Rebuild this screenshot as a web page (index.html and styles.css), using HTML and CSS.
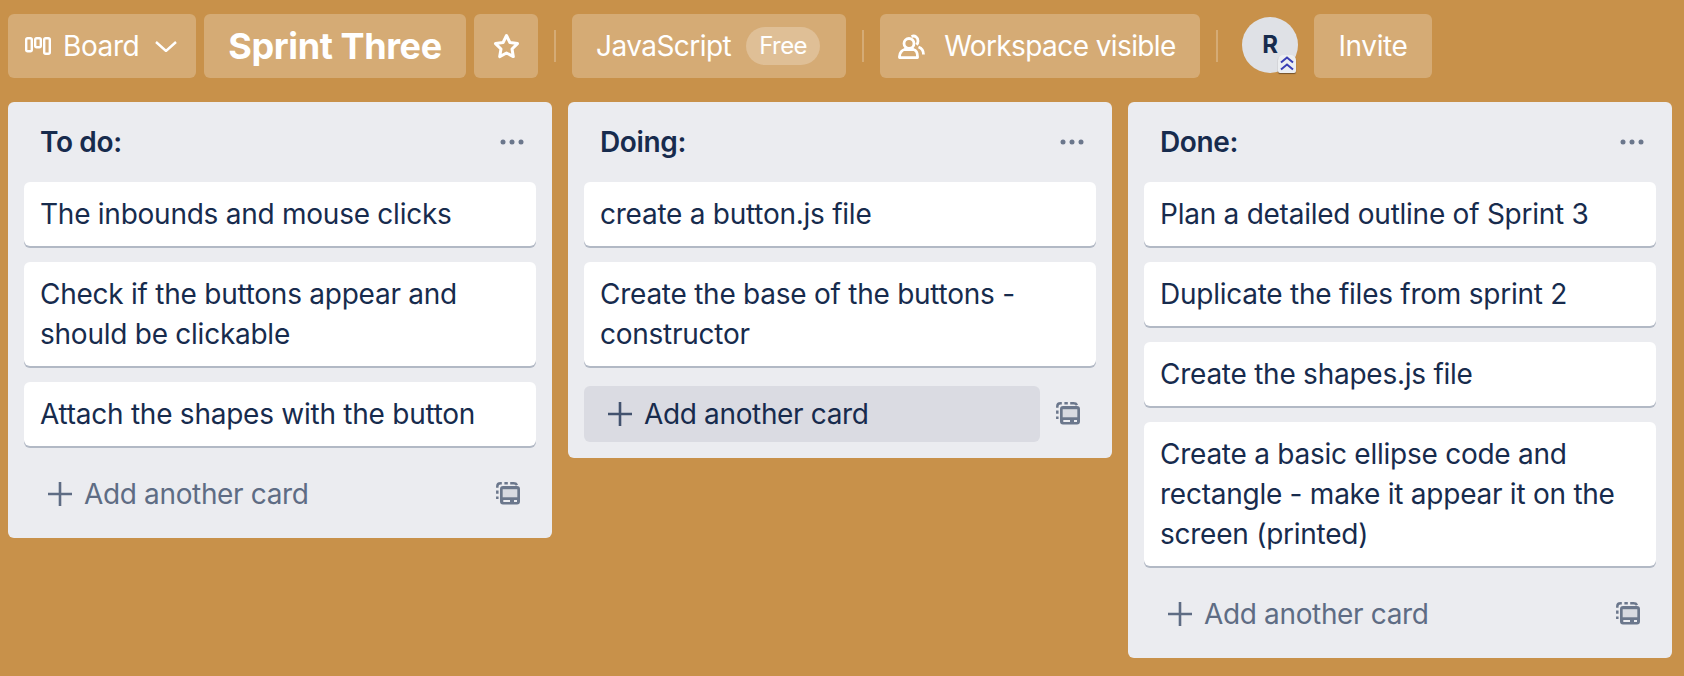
FILE: index.html
```html
<!DOCTYPE html>
<html lang="en">
<head>
    <meta charset="UTF-8">
    <title>Sprint Three | Trello</title>
    <link rel="stylesheet" href="styles.css">
</head>
<body>
    <!-- icons used more than once -->
    <svg class="defs" width="0" height="0">
        <symbol id="icon-template" viewBox="0 0 24 24">
            <path d="M1.300 17v-2.400M1.300 11.800V8.600M1.300 5.800V4.500C1.300 2.500 2.500 1.300 4.500 1.300h1.300M8.400 1.300h3.400M14.200 1.300h3.400c1.600 0 2.800.6 3.400 1.800" fill="none" stroke="currentColor" stroke-width="2.500"/>
            <path d="M6.500 7.300h15v8h-15z" fill="currentColor" opacity="0.15"/>
            <path fill-rule="evenodd" d="M7 4h14a3 3 0 0 1 3 3v12.500a3 3 0 0 1-3 3H7a3 3 0 0 1-3-3V7a3 3 0 0 1 3-3zM6.700 7.300v8h14.600v-8zM7.300 18v2H14v-2zM18 18v2h3v-2z" fill="currentColor"/>
        </symbol>
        <symbol id="icon-plus" viewBox="0 0 24 24">
            <path d="M12 0v24M0 12h24" fill="none" stroke="currentColor" stroke-width="2.600"/>
        </symbol>
        <symbol id="icon-dots" viewBox="0 0 24 6">
            <circle cx="3" cy="3" r="2.500" fill="currentColor"/>
            <circle cx="12" cy="3" r="2.500" fill="currentColor"/>
            <circle cx="21" cy="3" r="2.500" fill="currentColor"/>
        </symbol>
    </svg>

    <header class="board-header">
        <button class="hbtn board-switch">
            <svg class="icon-board" width="26" height="18" viewBox="0 0 26 18" fill="none" stroke="#fff" stroke-width="2.400">
                <rect x="1.200" y="1.200" width="5.600" height="13" rx="1.500"/>
                <rect x="10.200" y="1.200" width="5.600" height="9" rx="1.500"/>
                <rect x="19.200" y="1.200" width="5.600" height="15.600" rx="1.500"/>
            </svg>
            <span>Board</span>
            <svg class="icon-chevron" width="22" height="11" viewBox="0 0 22 11" fill="none" stroke="#fff" stroke-width="2.400">
                <path d="M1 1l10 9 10-9"/>
            </svg>
        </button>
        <button class="hbtn board-name">Sprint Three</button>
        <button class="hbtn star">
            <svg width="27" height="26" viewBox="0 0 27 26" fill="none" stroke="#fff" stroke-width="3" stroke-linejoin="round">
                <path d="M13.500 2.500l3.400 7 7.600 1.100-5.500 5.400 1.300 7.600-6.800-3.600-6.800 3.600 1.300-7.600-5.500-5.400 7.600-1.100z"/>
            </svg>
        </button>
        <span class="sep"></span>
        <button class="hbtn workspace">JavaScript <span class="pill">Free</span></button>
        <span class="sep"></span>
        <button class="hbtn visible">
            <svg width="27" height="25" viewBox="0 0 27 25" fill="none" stroke="#fff" stroke-width="2.800">
                <circle cx="11" cy="9.500" r="5"/>
                <path d="M1.500 23.600v-1.100c0-4 3-6.500 5-7h9c2 .5 4 3 4 7v1.100z" stroke-linejoin="round"/>
                <path d="M13.500 2.500c3.500-1.500 6.500 1 6.500 4.500 0 1.500-.5 2.800-1.500 3.800M20.500 13c3 1 5 4 5 7.500"/>
            </svg>
            <span>Workspace visible</span>
        </button>
        <span class="sep"></span>
        <div class="avatar">R
            <span class="badge">
                <svg width="14" height="15" viewBox="0 0 14 15" fill="none" stroke="#3a3fb5" stroke-width="2">
                    <path d="M1 6.500l6-5 6 5M1 13.500l6-5 6 5"/>
                </svg>
            </span>
        </div>
        <button class="hbtn invite">Invite</button>
    </header>

    <main class="board">
        <section class="list">
            <div class="list-head">
                <h2>To do:</h2>
                <svg class="dots" width="24" height="6"><use href="#icon-dots"/></svg>
            </div>
            <div class="card">The inbounds and mouse clicks</div>
            <div class="card">Check if the buttons appear and should be clickable</div>
            <div class="card">Attach the shapes with the button</div>
            <div class="list-foot">
                <div class="add"><svg width="24" height="24"><use href="#icon-plus"/></svg>Add another card</div>
                <svg class="template" width="24" height="24"><use href="#icon-template"/></svg>
            </div>
        </section>

        <section class="list">
            <div class="list-head">
                <h2>Doing:</h2>
                <svg class="dots" width="24" height="6"><use href="#icon-dots"/></svg>
            </div>
            <div class="card">create a button.js file</div>
            <div class="card">Create the base of the buttons - constructor</div>
            <div class="list-foot">
                <div class="add add-hover"><svg width="24" height="24"><use href="#icon-plus"/></svg>Add another card</div>
                <svg class="template" width="24" height="24"><use href="#icon-template"/></svg>
            </div>
        </section>

        <section class="list">
            <div class="list-head">
                <h2>Done:</h2>
                <svg class="dots" width="24" height="6"><use href="#icon-dots"/></svg>
            </div>
            <div class="card">Plan a detailed outline of Sprint 3</div>
            <div class="card">Duplicate the files from sprint 2</div>
            <div class="card">Create the shapes.js file</div>
            <div class="card">Create a basic ellipse code and rectangle - make it appear it on the screen (printed)</div>
            <div class="list-foot">
                <div class="add"><svg width="24" height="24"><use href="#icon-plus"/></svg>Add another card</div>
                <svg class="template" width="24" height="24"><use href="#icon-template"/></svg>
            </div>
        </section>
    </main>
</body>
</html>
```

FILE: styles.css
```css
body {
    margin: 0;
    height: 676px;
    overflow: hidden;
    background-color: #c8914a;
    font-family: Inter, "Noto Sans", sans-serif;
    font-size: 28px;
    line-height: 40px;
    letter-spacing: -0.35px;
    color: #172b4d;
}
.defs {
    position: absolute;
}
.board-header {
    display: flex;
    align-items: center;
    padding: 14px 8px 24px;
}
.hbtn {
    display: flex;
    align-items: center;
    justify-content: center;
    height: 64px;
    border: none;
    border-radius: 6px;
    background-color: rgba(255, 255, 255, 0.24);
    color: #fff;
    font: inherit;
    letter-spacing: -0.4px;
    margin-right: 8px;
    padding: 0;
}
.board-switch {
    width: 188px;
    justify-content: flex-start;
    padding-left: 17px;
}
.board-switch .icon-board {
    margin-right: 12px;
}
.board-switch .icon-chevron {
    margin-left: 16px;
}
.board-name {
    width: 262px;
    font-size: 36px;
    font-weight: 700;
}
.star {
    width: 64px;
    margin-right: 0;
}
.sep {
    width: 2px;
    height: 32px;
    margin: 0 16px;
    background-color: rgba(255, 255, 255, 0.24);
}
.workspace {
    width: 274px;
    margin-right: 0;
    padding-right: 2px;
    letter-spacing: -0.55px;
}
.pill {
    display: block;
    margin-left: 15px;
    padding: 0 13px;
    height: 38px;
    line-height: 38px;
    border-radius: 19px;
    font-size: 24px;
    background-color: rgba(255, 255, 255, 0.24);
}
.visible {
    width: 320px;
    margin-right: 0;
    padding-right: 6px;
    letter-spacing: -0.6px;
}
.visible span {
    margin-left: 19px;
}
.avatar {
    position: relative;
    width: 56px;
    height: 56px;
    margin-left: 8px;
    margin-right: 16px;
    margin-top: -3px;
    border-radius: 50%;
    background-color: #dfe1e6;
    text-align: center;
    font-size: 24px;
    font-weight: 700;
    line-height: 56px;
}
.badge {
    position: absolute;
    right: 2px;
    bottom: 0;
    display: flex;
    width: 18px;
    height: 18px;
    align-items: center;
    justify-content: center;
    border-radius: 5px 5px 2px 2px;
    background-color: #eceef1;
    box-shadow: 0 1px 1px rgba(60, 40, 20, 0.6);
}
.invite {
    width: 118px;
}

.board {
    display: flex;
    align-items: flex-start;
    gap: 16px;
    padding: 0 8px;
}
.list {
    width: 544px;
    box-sizing: border-box;
    padding: 0 16px 16px;
    border-radius: 6px;
    background-color: #ebecf0;
}
.list-head {
    display: flex;
    align-items: center;
    justify-content: space-between;
    height: 80px;
    padding: 0 12px 0 16px;
}
.list-head h2 {
    margin: 0;
    font-size: 28px;
    font-weight: 600;
}
.dots {
    color: #6b778c;
}
.card {
    margin-bottom: 16px;
    padding: 12px 16px;
    border-radius: 6px;
    background-color: #fff;
    box-shadow: 0 2px 0 rgba(9, 30, 66, 0.25);
    letter-spacing: -0.25px;
}
.list-foot {
    display: flex;
    align-items: center;
    justify-content: space-between;
    margin-top: 20px;
}
.add {
    display: flex;
    align-items: center;
    width: 456px;
    height: 56px;
    border-radius: 6px;
    padding-left: 24px;
    box-sizing: border-box;
    color: #5e6c84;
}
.add svg {
    margin-right: 12px;
}
.add-hover {
    background-color: #dadbe2;
    color: #172b4d;
}
.add-hover svg {
    color: #42526e;
}
.template {
    margin-right: 16px;
    color: #6b778c;
}
```
